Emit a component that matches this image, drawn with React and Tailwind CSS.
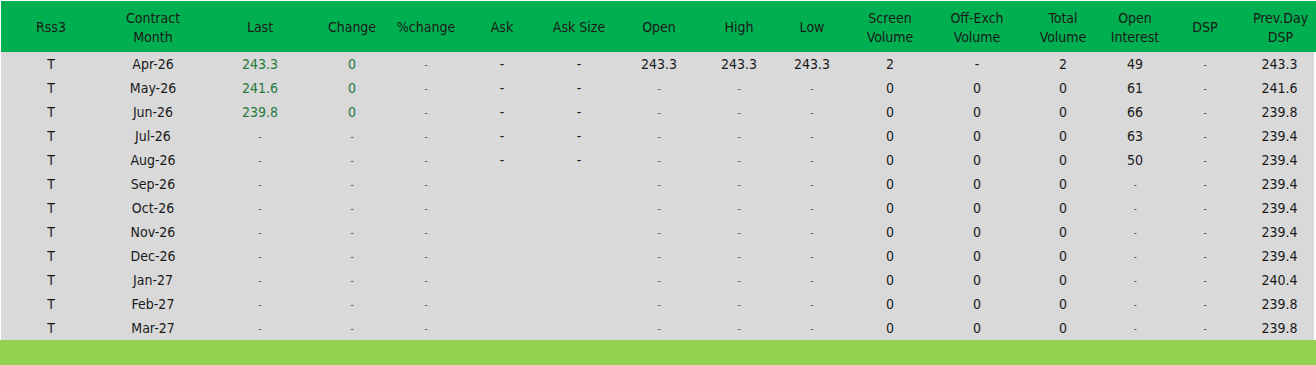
const S = 'sm'

const headers = [
  ['Rss3'],
  ['Contract', 'Month'],
  ['Last'],
  ['Change'],
  ['%change'],
  ['Ask'],
  ['Ask Size'],
  ['Open'],
  ['High'],
  ['Low'],
  ['Screen', 'Volume'],
  ['Off-Exch', 'Volume'],
  ['Total', 'Volume'],
  ['Open', 'Interest'],
  ['DSP'],
  ['Prev.Day', 'DSP'],
]

// 'sm' = faint little dash, '-' = normal dash, { g } = green value
const rows = [
  ['Apr-26', { g: '243.3' }, { g: '0' }, S, '-', '-', '243.3', '243.3', '243.3', '2', '-', '2', '49', S, '243.3'],
  ['May-26', { g: '241.6' }, { g: '0' }, S, '-', '-', S, S, S, '0', '0', '0', '61', S, '241.6'],
  ['Jun-26', { g: '239.8' }, { g: '0' }, S, '-', '-', S, S, S, '0', '0', '0', '66', S, '239.8'],
  ['Jul-26', S, S, S, '-', '-', S, S, S, '0', '0', '0', '63', S, '239.4'],
  ['Aug-26', S, S, S, '-', '-', S, S, S, '0', '0', '0', '50', S, '239.4'],
  ['Sep-26', S, S, S, '', '', S, S, S, '0', '0', '0', S, S, '239.4'],
  ['Oct-26', S, S, S, '', '', S, S, S, '0', '0', '0', S, S, '239.4'],
  ['Nov-26', S, S, S, '', '', S, S, S, '0', '0', '0', S, S, '239.4'],
  ['Dec-26', S, S, S, '', '', S, S, S, '0', '0', '0', S, S, '239.4'],
  ['Jan-27', S, S, S, '', '', S, S, S, '0', '0', '0', S, S, '240.4'],
  ['Feb-27', S, S, S, '', '', S, S, S, '0', '0', '0', S, S, '239.8'],
  ['Mar-27', S, S, S, '', '', S, S, S, '0', '0', '0', S, S, '239.8'],
]

const cols = 'grid grid-cols-[100px_104px_110px_74px_74px_78px_76px_84px_76px_70px_86px_88px_84px_60px_80px_1fr]'

function Cell({ v }) {
  if (v === S) return <div className="flex items-center justify-center text-[10px] text-[#555]">-</div>
  if (v && v.g) return <div className="flex items-center justify-center text-[#1f7a3c]">{v.g}</div>
  return <div className="flex items-center justify-center">{v}</div>
}

export default function App() {
  return (
    <div className="w-[1316px] h-[365px] bg-white pt-px pl-px overflow-hidden text-[14px] text-[#1a1a1a]" style={{ fontFamily: '"DejaVu Sans Condensed", "DejaVu Sans", sans-serif', fontStretch: 'condensed' }}>
      <div className={`${cols} h-[51px] pt-[2px] bg-[#00b050] leading-[19px]`}>
        {headers.map((h, i) => (
          <div key={i} className="flex flex-col items-center justify-center text-center">
            {h.map(line => <span key={line}>{line}</span>)}
          </div>
        ))}
      </div>
      <div className="bg-[#d9d9d9] mr-[2px]">
        {rows.map(r => (
          <div key={r[0]} className={`${cols} h-6`}>
            <div className="flex items-center justify-center">T</div>
            <div className="flex items-center justify-center">{r[0]}</div>
            {r.slice(1).map((v, i) => <Cell key={i} v={v} />)}
          </div>
        ))}
      </div>
      <div className="h-[25px] bg-[#92d050] -ml-px"></div>
    </div>
  )
}
